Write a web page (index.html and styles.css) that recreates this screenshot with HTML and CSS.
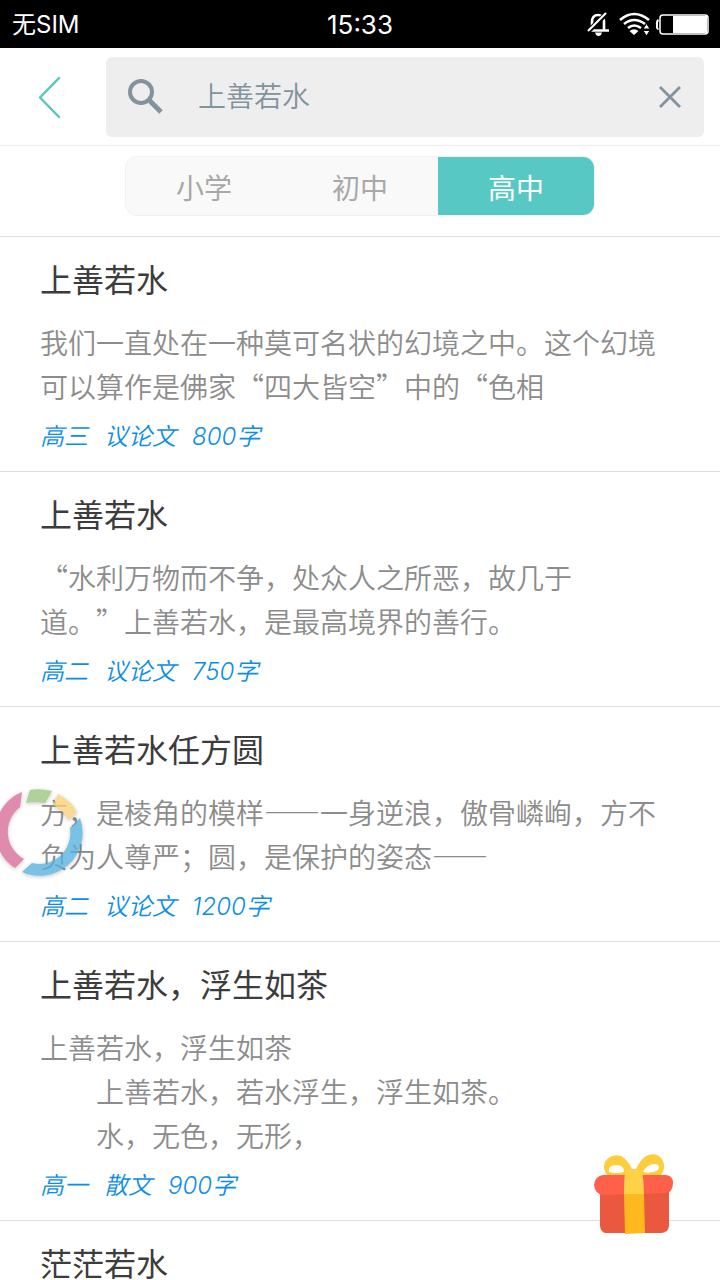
FILE: index.html
```html
<!DOCTYPE html>
<html lang="zh-CN">
<head>
<meta charset="utf-8">
<meta name="viewport" content="width=device-width, initial-scale=1">
<title>上善若水</title>
<link rel="stylesheet" href="styles.css">
</head>
<body>
<div class="app">
  <div class="status">
    <span class="carrier">无SIM</span>
    <span class="clock">15:33</span>
    <span class="indicators">
      <svg width="122" height="28" viewBox="0 0 122 28" fill="none" stroke="#fff" aria-hidden="true">
        <path d="M5 19V11Q5 4 11 4Q16 4 17 10V19M2 19.500H22" stroke-width="2.600"/>
        <path d="M1 20.500L20 2" stroke="#000" stroke-width="5"/>
        <path d="M1 20L19 2" stroke-width="2.200"/>
        <path d="M8 21.500H15Q14 25 11.500 25Q9 25 8 21.500Z" fill="#fff" stroke="none"/>
        <path d="M33 9Q47 -3 62 9M37 13Q47 5 58 13M41 17Q47 12 54 17" stroke-width="2.600"/>
        <path d="M42.500 20Q47 16.500 51.500 20L47 24Z" fill="#fff" stroke="none"/>
        <path d="M56 18L59.500 12.500L63 18ZM56 19.500H63L59.500 25Z" fill="#fff" stroke="#000" stroke-width="1"/>
        <path d="M71.500 9Q69.500 10 70 14Q69.500 18 71.500 18" stroke-width="2"/>
        <rect x="73" y="4" width="48" height="19" rx="3" stroke-width="1.500"/>
        <path d="M86 5H120V22H86Z" fill="#fff" stroke="none"/>
      </svg>
    </span>
  </div>

  <header class="topbar">
    <button class="back" type="button" aria-label="返回">
      <svg width="26" height="44" viewBox="0 0 26 44" fill="none" stroke="#5bc5c0" stroke-width="2.500" stroke-linecap="round" stroke-linejoin="round"><path d="M23 3L4 22.500L23 42"/></svg>
    </button>
    <form class="search" role="search">
      <svg width="36" height="36" viewBox="0 0 36 36" fill="none" stroke="#82939d" aria-hidden="true">
        <circle cx="14" cy="13" r="11" stroke-width="4"/>
        <path d="M22.500 21.500L34 33" stroke-width="5"/>
      </svg>
      <input class="query" type="text" aria-label="搜索" value="上善若水">
      <button class="clear" type="reset" aria-label="清除">
        <svg width="22" height="22" viewBox="0 0 22 22" fill="none" stroke="#82939d" stroke-width="2.800"><path d="M1 1L21 21M21 1L1 21"/></svg>
      </button>
    </form>
  </header>

  <nav class="filters">
    <div class="tabs" role="tablist">
      <button class="tab" type="button" role="tab">小学</button>
      <button class="tab" type="button" role="tab">初中</button>
      <button class="tab tab-active" type="button" role="tab" aria-selected="true">高中</button>
    </div>
  </nav>

  <main class="list">
    <article class="item">
      <h2 class="title">上善若水</h2>
      <p class="excerpt">我们一直处在一种莫可名状的幻境之中。这个幻境<br>可以算作是佛家“四大皆空”中的“色相</p>
      <p class="meta"><span>高三</span><span>议论文</span><span>800字</span></p>
    </article>
    <article class="item">
      <h2 class="title">上善若水</h2>
      <p class="excerpt">“水利万物而不争，处众人之所恶，故几于<br>道。”上善若水，是最高境界的善行。</p>
      <p class="meta"><span>高二</span><span>议论文</span><span>750字</span></p>
    </article>
    <article class="item">
      <h2 class="title">上善若水任方圆</h2>
      <p class="excerpt">方，是棱角的模样——一身逆浪，傲骨嶙峋，方不<br>负为人尊严；圆，是保护的姿态——</p>
      <p class="meta"><span>高二</span><span>议论文</span><span>1200字</span></p>
    </article>
    <article class="item">
      <h2 class="title">上善若水，浮生如茶</h2>
      <p class="excerpt">上善若水，浮生如茶<br>　　上善若水，若水浮生，浮生如茶。<br>　　水，无色，无形，</p>
      <p class="meta"><span>高一</span><span>散文</span><span>900字</span></p>
    </article>
    <article class="item">
      <h2 class="title">茫茫若水</h2>
    </article>
  </main>

  <button class="ring" type="button" aria-label="快捷菜单">
    <svg width="88" height="96" viewBox="0 0 88 96">
      <path d="M22 7A43 43 0 0 0 15 83L24 74A31 31 0 0 1 20 22Z" fill="#d66b98"/>
      <path d="M30 5Q40 3 52 6L45 18Q36 16 26 18Z" fill="#9bc581"/>
      <path d="M58 9Q70 15 77 27L69 35Q63 25 53 20Z" fill="#fbd176"/>
      <path d="M80 33A43 43 0 0 1 22 87L32 78A31 31 0 0 0 70 43Z" fill="#54b1df"/>
    </svg>
  </button>
  <button class="gift" type="button" aria-label="礼物">
    <svg width="80" height="82" viewBox="0 0 80 82">
      <path fill="#fdcd3c" fill-rule="evenodd" d="M32 22H14Q8 15 11 8Q17 -1 27 2Q34 6 38 15H42Q46 6 52 2Q64 -3 69 7Q72 15 67 21H49ZM15 18Q22 20 30 18Q30 11 23 11Q16 11 15 15ZM49 18Q58 20 64 16Q67 11 61 10Q53 10 49 18Z"/>
      <path fill="#ea583f" d="M6 35H75V72Q74 79 67 79H14Q7 80 6 72Z"/>
      <path fill="#ff604a" d="M9 21H71Q79 21 79 29Q79 39 71 39L9 41Q1 40 0 31Q1 22 9 21Z"/>
      <path fill="#fdd248" d="M30 40Q30 20 32 17Q40 13 48 17Q50 28 50 40Z"/>
      <path fill="#ffb81e" d="M30 40H50L51 79L31 80Z"/>
    </svg>
  </button>
</div>
</body>
</html>
```
FILE: styles.css
```css
* {
  box-sizing: border-box;
}

body {
  margin: 0;
  background: #fff;
  font-family: "Noto Sans CJK SC", sans-serif;
  text-spacing-trim: space-all;
}

button {
  margin: 0;
  padding: 0;
  border: 0;
  background: none;
  font: inherit;
}

svg {
  display: block;
}

.app {
  position: relative;
  display: flex;
  flex-direction: column;
  height: 100vh;
  overflow: hidden;
}

.status {
  flex: none;
  display: grid;
  grid-template-columns: 1fr auto 1fr;
  align-items: center;
  height: 48px;
  padding: 2px 12px 0;
  background: #000;
  color: #fff;
  font-family: Inter, "Noto Sans CJK SC", sans-serif;
  line-height: 46px;
}

.carrier {
  font-size: 24px;
}

.clock {
  font-size: 26px;
}

.indicators {
  justify-self: end;
  margin-right: -1px;
}

.topbar {
  flex: none;
  display: flex;
  align-items: center;
  height: 98px;
  padding-right: 16px;
  border-bottom: 1px solid #ececec;
}

.back {
  display: flex;
  justify-content: center;
  width: 106px;
  padding-right: 8px;
}

.search {
  flex: 1;
  display: flex;
  align-items: center;
  height: 80px;
  padding: 0 23px 0 21px;
  border-radius: 6px;
  background: #eee;
}

.query {
  flex: 1;
  min-width: 0;
  height: 40px;
  margin-left: 35px;
  padding: 0 0 3px;
  border: 0;
  outline: 0;
  background: transparent;
  color: #82939d;
  font: 350 28px/36px "Noto Sans CJK SC", sans-serif;
}

.filters {
  flex: none;
  display: flex;
  justify-content: center;
  height: 91px;
  padding: 10px 0 20px;
  border-bottom: 1px solid #dedede;
}

.tabs {
  display: flex;
  width: 65.3%;
  border: 1px solid #f1f1f1;
  border-radius: 12px;
  overflow: hidden;
  background: #f9f9f9;
}

.tab {
  flex: 1;
  padding-top: 1px;
  color: #a8a8a8;
  font-size: 28px;
}

.tab-active {
  background: #58c8c4;
  color: #fff;
}

.list {
  flex: 1;
  min-height: 0;
  overflow: hidden;
}

.item {
  padding: 20px 40px 16px;
  border-bottom: 1px solid #dedede;
}

.title {
  margin: 0 0 20px;
  color: #3c3c3c;
  font-size: 32px;
  font-weight: 400;
  line-height: 43px;
}

.excerpt {
  margin: 0 0 11px;
  color: #8c8c8c;
  font-size: 28px;
  font-weight: 350;
  line-height: 44px;
  white-space: nowrap;
}

.meta {
  display: flex;
  gap: 16px;
  margin: 0;
  color: #0c8ee6;
  font-family: Inter, "Noto Sans CJK SC", sans-serif;
  font-size: 24px;
  font-style: italic;
  font-weight: 350;
  line-height: 36px;
}

.ring {
  position: absolute;
  top: 785px;
  left: 0;
  opacity: 0.78;
  filter: drop-shadow(0 1px 2px rgba(0, 0, 0, 0.3));
}

.gift {
  position: absolute;
  right: 46px;
  bottom: 44px;
}
```
